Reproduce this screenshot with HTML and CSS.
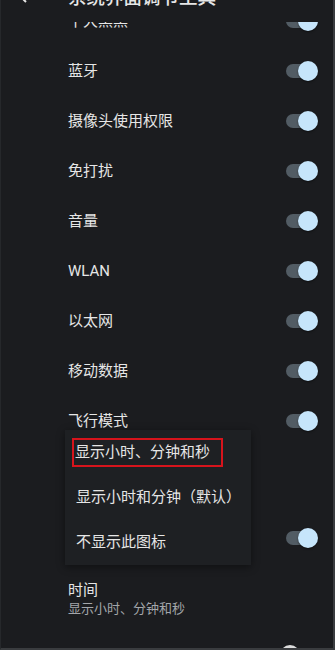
FILE: index.html
```html
<!DOCTYPE html>
<html lang="zh-CN">
<head>
    <meta charset="UTF-8">
    <meta name="viewport" content="width=device-width, initial-scale=1.0">
    <title>系统界面调节工具</title>
    <link rel="stylesheet" href="styles.css">
</head>
<body>
    <div class="screen">
        <header class="appbar">
            <svg class="back" width="16" height="16" viewBox="0 0 16 16">
                <path d="M10 2 L4 8 L10 14" fill="none" stroke="#e6e6e6" stroke-width="2"/>
            </svg>
            <h1>系统界面调节工具</h1>
        </header>

        <div class="list">
            <div class="rows">
                <div class="row"><span class="label">十大黑黑</span><span class="toggle on"></span></div>
                <div class="row"><span class="label">蓝牙</span><span class="toggle on"></span></div>
                <div class="row"><span class="label">摄像头使用权限</span><span class="toggle on"></span></div>
                <div class="row"><span class="label">免打扰</span><span class="toggle on"></span></div>
                <div class="row"><span class="label">音量</span><span class="toggle on"></span></div>
                <div class="row"><span class="label">WLAN</span><span class="toggle on"></span></div>
                <div class="row"><span class="label">以太网</span><span class="toggle on"></span></div>
                <div class="row"><span class="label">移动数据</span><span class="toggle on"></span></div>
                <div class="row"><span class="label">飞行模式</span><span class="toggle on"></span></div>
                <!-- rows covered by the popup menu -->
                <div class="row two-line"></div>
                <div class="row"><span class="label"></span><span class="toggle on"></span></div>
                <div class="row two-line">
                    <div class="label">时间</div>
                    <div class="sub">显示小时、分钟和秒</div>
                </div>
                <div class="row"><span class="label"></span><span class="toggle off"></span></div>
            </div>
        </div>

        <div class="menu">
            <div class="menu-item"><span class="picked">显示小时、分钟和秒</span></div>
            <div class="menu-item">显示小时和分钟（默认）</div>
            <div class="menu-item">不显示此图标</div>
        </div>
    </div>
</body>
</html>
```

FILE: styles.css
```css
* {
    box-sizing: border-box;
}

body {
    margin: 0;
    padding: 0;
    background-color: #1b1c1f;
    font-family: Roboto, "Noto Sans CJK SC", sans-serif;
    color: #e6e6e6;
}

.screen {
    position: relative;
    width: 335px;
    height: 650px;
    display: flex;
    flex-direction: column;
    overflow: hidden;
    background-color: #1b1c1f;
    border-left: 1px solid #26282b;
    border-right: 2px solid #3a3c3f;
    border-bottom: 2px solid #3a3c3f;
}

.appbar {
    height: 22px;
    flex-shrink: 0;
    display: flex;
    align-items: flex-start;
    overflow: hidden;
    background-color: #1b1c1f;
}

.back {
    margin: -12px 0 0 15px;
    flex-shrink: 0;
}

.appbar h1 {
    margin: -11px 0 0 36px;
    font-size: 18.5px;
    line-height: 19px;
    font-weight: 500;
    letter-spacing: 0;
}

.list {
    flex: 1;
    overflow: hidden;
}

.rows {
    margin-top: -26px;
}

.row {
    height: 50px;
    display: flex;
    align-items: center;
    justify-content: space-between;
    padding: 0 15px 0 67px;
}

.label {
    font-size: 15px;
    line-height: 20px;
}

.row.two-line {
    height: 67px;
    display: block;
    padding-top: 17px;
}

.sub {
    font-size: 13px;
    line-height: 18px;
    color: #a3a6aa;
}

.toggle {
    position: relative;
    width: 32px;
    height: 20px;
    flex-shrink: 0;
}

.toggle::before {
    content: "";
    position: absolute;
    left: 0;
    top: 3px;
    width: 28px;
    height: 14px;
    border-radius: 7px;
    background-color: #525c64;
}

.toggle::after {
    content: "";
    position: absolute;
    top: 0;
    width: 20px;
    height: 20px;
    border-radius: 50%;
    box-shadow: 0 1px 2px rgba(0, 0, 0, 0.5);
}

.toggle.on::after {
    right: 0;
    background-color: #c6e5fb;
}

.toggle.off::before {
    background-color: #55585c;
}

.toggle.off::after {
    left: -6px;
    background-color: #dcdcdc;
}

.menu {
    position: absolute;
    left: 64px;
    top: 430px;
    width: 186px;
    background-color: #1e2023;
    box-shadow: 0 2px 8px rgba(0, 0, 0, 0.45);
}

.menu-item {
    height: 45px;
    display: flex;
    align-items: center;
    padding-left: 11px;
    font-size: 15px;
    line-height: 21px;
}

.picked {
    margin-left: -4px;
    padding: 2px 11px 2px 1px;
    border: 2px solid #d7141c;
}
```
